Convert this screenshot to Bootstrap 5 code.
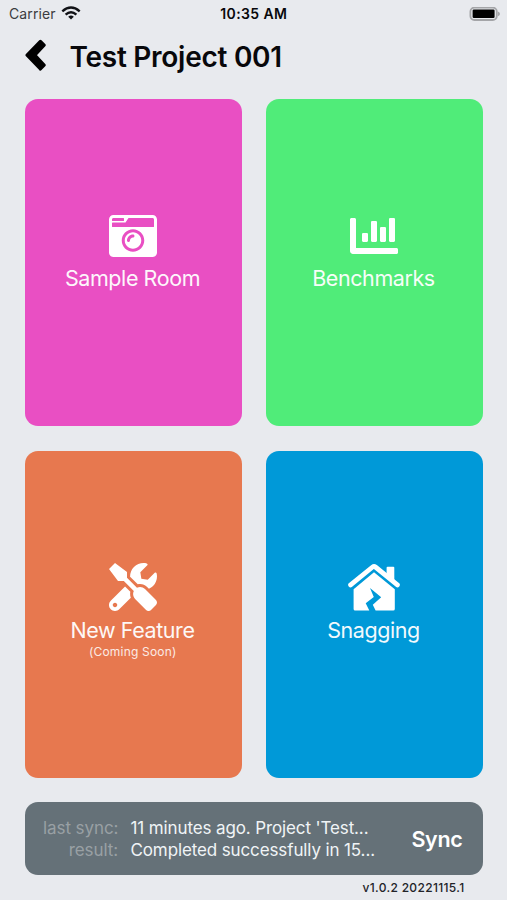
<!DOCTYPE html>
<html lang="en">
<head>
<meta charset="utf-8">
<meta name="viewport" content="width=device-width, initial-scale=1">
<title>Test Project 001</title>
<link href="https://cdn.jsdelivr.net/npm/bootstrap@5.3.0/dist/css/bootstrap.min.css" rel="stylesheet">
<style>
body{background:#e8eaee;font-family:Inter,"Liberation Sans",sans-serif;color:#08080b;width:507px;height:900px;overflow:hidden}
svg{display:block;flex:none}
.status{height:28px;padding:0 7px 0 9px;font-size:14px;line-height:28px}
.status>*{flex:1 1 0}
.carrier{color:#3b3c40;letter-spacing:.1px}
.carrier svg{margin-left:5px}
.clock{font-weight:600;letter-spacing:.4px;padding-right:1.5px}
.title-bar{height:71px;padding:8px 0 0 25px}
.title-bar svg{margin-top:3px}
.title-bar h1{font-size:28px;line-height:42px;font-weight:600;letter-spacing:-.27px;margin-left:22.5px}
.tiles{display:grid;grid-template-columns:217px 217px;grid-auto-rows:327px;gap:24.5px 24px;padding:0 25px}
.tile{border-radius:13px;color:#fff;padding-top:112.5px}
.tile>svg{margin-right:1px}
.tile .name{font-size:21.5px;line-height:26px;margin-top:5.5px;margin-right:2px;font-weight:400;letter-spacing:-.42px;opacity:.95}
.tile .note{font-size:12px;line-height:15px;letter-spacing:.2px;opacity:.85;margin-top:1px;margin-right:1.5px}
.pink{background:#e94fc3}.green{background:#50ec79}.orange{background:#e7784f}.blue{background:#0099d8}
.sync{margin:24px 24.5px 0 25px;height:73px;border-radius:13px;background:#657178;color:#f0f4f6;font-size:17px;line-height:22px;padding:2px 20px 0 18px}
.sync dt{font-weight:400;color:#99a0a4;width:75px;text-align:right;white-space:nowrap;letter-spacing:-.08px}
.sync dd{margin:0 0 0 12.5px;width:247px;letter-spacing:-.12px}
.sync button{font-size:21.5px;font-weight:600;color:#fff;background:none;border:0;padding:0;letter-spacing:-.3px}
.version{font-size:12px;line-height:16px;margin:5.5px 42.5px 0 0;color:#222328;font-weight:500;letter-spacing:.33px}
</style>
</head>
<body>
<header class="status d-flex align-items-center">
  <div class="carrier d-flex align-items-center"><span>Carrier</span>
    <svg width="20" height="16" viewBox="0 0 20 16" fill="none" stroke="#111216" stroke-width="2.4"><path d="M1.3 5.3Q10 -2.3 18.7 5.3M4.6 8.7Q10 4 15.4 8.7"/><path d="M10 13.5 7.2 10.7Q10 8.5 12.8 10.7Z" fill="#111216" stroke="none"/></svg>
  </div>
  <div class="clock text-center">10:35 AM</div>
  <div class="d-flex justify-content-end"><svg width="31" height="15" viewBox="0 0 31 15"><rect x="1.4" y=".6" width="26.4" height="12.4" rx="4" fill="#e8eaee" stroke="#a4a5a8" stroke-width="1.8"/><rect x="3.6" y="2.6" width="22" height="8.4" rx="1.2" fill="#000"/><path d="M28.9 4.6v4.6Q31 8.4 31 6.9T28.9 4.6Z" fill="#a4a5a8"/></svg></div>
</header>
<div class="title-bar d-flex align-items-start">
  <svg width="22" height="33" viewBox="0 0 22 33"><path d="M2.1 16.2 15.4 2.4 19.1 6.2 9.8 16.2 19.1 26.2 15.4 30Z" stroke="#000" stroke-width="3.2" stroke-linejoin="round"/></svg>
  <h1 class="mb-0">Test Project 001</h1>
</div>
<main class="tiles">
  <a class="tile pink d-flex flex-column align-items-center text-decoration-none">
    <svg width="48" height="48" viewBox="0 0 512 512" fill="#fff"><path d="M48 32C21.5 32 0 53.5 0 80v352c0 26.5 21.5 48 48 48h416c26.5 0 48-21.5 48-48V80c0-26.5-21.5-48-48-48H48zm0 32h106c3.3 0 6 2.7 6 6v20c0 3.3-2.7 6-6 6H38c-3.3 0-6-2.7-6-6V80c0-8.8 7.2-16 16-16zm426 96H38c-3.3 0-6-2.7-6-6v-36c0-3.3 2.7-6 6-6h138l30.2-45.3c1.1-1.7 3-2.7 5-2.7H464c8.8 0 16 7.2 16 16v74c0 3.3-2.7 6-6 6zM256 424c-66.2 0-120-53.8-120-120s53.8-120 120-120 120 53.8 120 120-53.8 120-120 120zm0-208c-48.5 0-88 39.5-88 88s39.5 88 88 88 88-39.5 88-88-39.5-88-88-88zm-48 104c-8.8 0-16-7.2-16-16 0-35.3 28.7-64 64-64 8.8 0 16 7.2 16 16s-7.2 16-16 16c-17.6 0-32 14.4-32 32 0 8.8-7.2 16-16 16z"/></svg>
    <span class="name">Sample Room</span>
  </a>
  <a class="tile green d-flex flex-column align-items-center text-decoration-none">
    <svg width="48" height="48" viewBox="0 0 512 512" fill="#fff"><path d="M332.8 320h38.4c6.4 0 12.8-6.4 12.8-12.8V172.8c0-6.4-6.4-12.8-12.8-12.8h-38.4c-6.4 0-12.8 6.4-12.8 12.8v134.4c0 6.4 6.4 12.8 12.8 12.8zm96 0h38.4c6.4 0 12.8-6.4 12.8-12.8V76.8c0-6.4-6.4-12.8-12.8-12.8h-38.4c-6.4 0-12.8 6.4-12.8 12.8v230.4c0 6.4 6.4 12.8 12.8 12.8zm-288 0h38.4c6.4 0 12.8-6.4 12.8-12.8v-70.4c0-6.4-6.4-12.8-12.8-12.8h-38.4c-6.4 0-12.8 6.4-12.8 12.8v70.4c0 6.4 6.4 12.8 12.8 12.8zm96 0h38.4c6.4 0 12.8-6.4 12.8-12.8V108.8c0-6.4-6.4-12.8-12.8-12.8h-38.4c-6.4 0-12.8 6.4-12.8 12.8v198.4c0 6.4 6.4 12.8 12.8 12.8zM496 384H64V80c0-8.84-7.16-16-16-16H16C7.16 64 0 71.16 0 80v336c0 17.67 14.33 32 32 32h464c8.84 0 16-7.16 16-16v-32c0-8.84-7.16-16-16-16z"/></svg>
    <span class="name">Benchmarks</span>
  </a>
  <a class="tile orange d-flex flex-column align-items-center text-decoration-none">
    <svg width="48" height="48" viewBox="0 0 512 512" fill="#fff"><path d="M501.1 395.7L384 278.6c-23.1-23.1-57.6-27.6-85.4-13.9L192 158.1V96L64 0 0 64l96 128h62.1l106.6 106.6c-13.6 27.8-9.2 62.3 13.9 85.4l117.1 117.1c14.6 14.6 38.2 14.6 52.7 0l52.7-52.7c14.5-14.6 14.5-38.2 0-52.7zM331.7 225c28.3 0 54.9 11 74.9 31l19.4 19.4c15.8-6.9 30.8-16.5 43.8-29.5 37.1-37.1 49.7-89.3 37.9-136.7-2.2-9-13.5-12.1-20.1-5.5l-74.4 74.4-67.9-11.3L334 98.9l74.4-74.4c6.6-6.6 3.4-17.9-5.7-20.2-47.4-11.7-99.6.9-136.6 37.9-28.5 28.5-41.9 66.1-41.2 103.6l82.1 82.1c8.1-1.9 16.5-2.9 24.7-2.9zm-103.9 82l-56.7-56.7L18.7 402.8c-25 25-25 65.5 0 90.5s65.5 25 90.5 0l123.6-123.6c-7.6-19.9-9.9-41.6-5-62.7zM64 472c-13.2 0-24-10.8-24-24 0-13.3 10.7-24 24-24s24 10.7 24 24c0 13.2-10.7 24-24 24z"/></svg>
    <span class="name">New Feature</span>
    <span class="note">(Coming Soon)</span>
  </a>
  <a class="tile blue d-flex flex-column align-items-center text-decoration-none">
    <svg width="54" height="48" viewBox="0 0 54 48" fill="#fff"><path d="M3.6 21.9 25.6 4Q27 2.9 28.4 4L50.4 21.9" fill="none" stroke="#fff" stroke-width="4.8" stroke-linecap="round"/><path d="M39.6 4.7Q39.6 3.7 40.6 3.7H46.3Q47.3 3.7 47.3 4.7V19.2L39.6 13Z"/><path d="M27 9.3 47.8 26.2V46Q47.8 47.6 46.2 47.6H28.6L25.8 41.7 34.2 34.3 23 25 26.8 34 18.7 40.3 22.3 47.6H8.2Q6.6 47.6 6.6 46V26.2Z"/></svg>
    <span class="name">Snagging</span>
  </a>
</main>
<section class="sync d-flex align-items-center justify-content-between">
  <div>
    <dl class="d-flex mb-0"><dt>last sync:</dt><dd class="text-nowrap">11 minutes ago. Project 'Test...</dd></dl>
    <dl class="d-flex mb-0"><dt>result:</dt><dd class="text-nowrap">Completed successfully in 15...</dd></dl>
  </div>
  <button type="button">Sync</button>
</section>
<footer class="version text-end">v1.0.2 20221115.1</footer>
<script src="https://cdn.jsdelivr.net/npm/bootstrap@5.3.0/dist/js/bootstrap.bundle.min.js"></script>
</body>
</html>
